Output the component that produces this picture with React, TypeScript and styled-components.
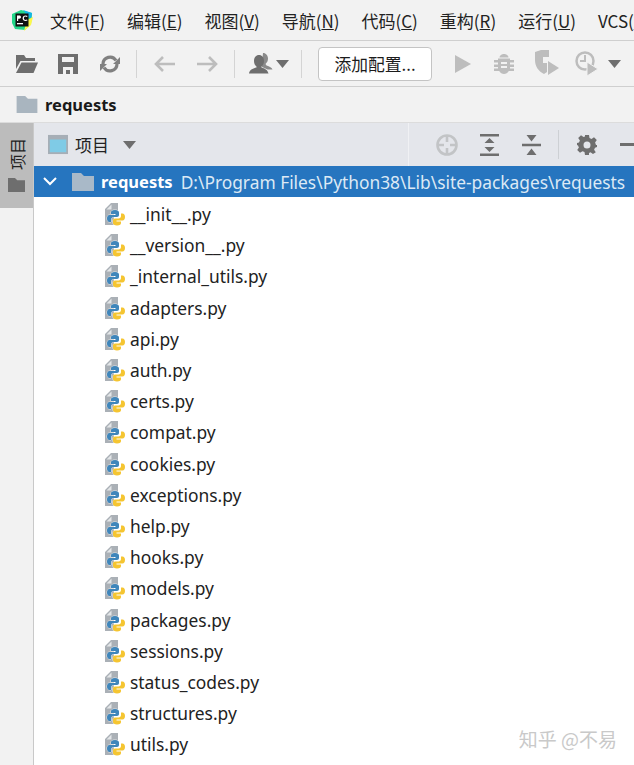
import * as React from "react";
import styled, { createGlobalStyle } from "styled-components";

const files = [
  "__init__.py",
  "__version__.py",
  "_internal_utils.py",
  "adapters.py",
  "api.py",
  "auth.py",
  "certs.py",
  "compat.py",
  "cookies.py",
  "exceptions.py",
  "help.py",
  "hooks.py",
  "models.py",
  "packages.py",
  "sessions.py",
  "status_codes.py",
  "structures.py",
  "utils.py",
];

const menus = [
  { label: "文件", key: "F" },
  { label: "编辑", key: "E" },
  { label: "视图", key: "V" },
  { label: "导航", key: "N" },
  { label: "代码", key: "C" },
  { label: "重构", key: "R" },
  { label: "运行", key: "U" },
  { label: "VCS", key: "S" },
];

const FolderShape = ({ fill, w, h }: { fill: string; w: number; h: number }) => (
  <svg width={w} height={h} viewBox="0 0 22 18">
    <path d="M0 0h9l3 3h10v15H0z" fill={fill} />
  </svg>
);

const pyBlue =
  "M11 8c-3 0-4 1-4 2.500V12h4.500v1H5.500C4 13 3 14.300 3 16.500S4 20 5.500 20H7v-2.500c0-1.500 1-2.500 2.500-2.500h3.500c1.200 0 2-.8 2-2v-2.500C15 9 13.500 8 11 8z";

const PyIcon = () => (
  <svg width="22" height="24" viewBox="0 0 22 24">
    <path d="M1 7l6-6h7v8H10v14H1z" fill="#aab0b6" />
    <path d="M2.500 7.500H7.500V2.500z" fill="#e3e6e8" />
    <path d={pyBlue} fill="#3f86bb" stroke="#fff" strokeWidth="0.700" paintOrder="stroke" />
    <path d={pyBlue} fill="#f5c531" stroke="#fff" strokeWidth="0.700" paintOrder="stroke" transform="rotate(180 12 15.800)" />
  </svg>
);

const Logo = () => (
  <svg width="22" height="22" viewBox="0 0 22 22">
    <path d="M1 5l9-4 11 3-1 11-6 6-10-1-3-6z" fill="#21d789" />
    <path d="M12 1l9 3-1 7z" fill="#12b5e8" />
    <path d="M13 22l7-6 2-8-6 3z" fill="#fcf84a" />
    <rect x="4.500" y="4.500" width="13" height="13" fill="#111" />
    <rect x="6" y="14" width="6" height="1.300" fill="#fff" />
    <path d="M6 6.500h2.200c1.200 0 1.800.7 1.800 1.600s-.7 1.600-1.800 1.600H7.200V12H6zM14.500 12c-1.700 0-2.900-1.200-2.900-2.800s1.200-2.800 3-2.800c.9 0 1.500.3 2 .7l-.7.9c-.4-.3-.8-.5-1.300-.5-1 0-1.700.7-1.700 1.700s.7 1.700 1.700 1.700c.5 0 .9-.2 1.300-.5l.7.8c-.5.500-1.100.8-2.100.8z" fill="#fff" />
  </svg>
);

const OpenFolder = () => (
  <svg width="22" height="18" viewBox="0 0 22 18">
    <path d="M0 0h8l2 3h9v3H4.500L0 14z" fill="#6e6e6e" />
    <path d="M5.500 7.500H22L17.500 18H0z" fill="#6e6e6e" />
  </svg>
);

const Save = () => (
  <svg width="20" height="20" viewBox="0 0 20 20">
    <path fillRule="evenodd" d="M0 0h20v20H0zM4 3v5h12V3zM5 13v7h10v-7z" fill="#6e6e6e" />
    <rect x="8" y="16" width="4" height="4" fill="#6e6e6e" />
  </svg>
);

const Sync = () => (
  <svg width="20" height="20" viewBox="0 0 20 20" fill="none">
    <path d="M16 6.500A7 7 0 0 0 3 10" stroke="#808080" strokeWidth="3.200" />
    <path d="M4 13.500A7 7 0 0 0 17 10" stroke="#808080" strokeWidth="3.200" />
    <path d="M20 3v7h-7zM0 17v-7h7z" fill="#808080" />
  </svg>
);

const Arrow = ({ flip }: { flip?: boolean }) => (
  <svg width="21" height="16" viewBox="0 0 21 16" style={flip ? { transform: "scaleX(-1)" } : undefined}>
    <path d="M9 1L2 8l7 7M2 8h19" fill="none" stroke="#bdbdbd" strokeWidth="2.600" />
  </svg>
);

const User = () => (
  <svg width="24" height="21" viewBox="0 0 24 21">
    <path d="M14 0c3 0 5 2.500 5 5.500 0 2.500-1 4-2.500 5.500l1 1.500c3 1 5.500 2 6 4h-5L13 14V9z" fill="#8a8a8a" />
    <path d="M10 2c3 0 5 2.500 5 6 0 2.500-1 4.500-2.500 5.500v1c3 1 6 2 7 6H0c.5-4 4-5 7.500-6v-1C6 12.500 5 10.500 5 8c0-3.500 2-6 5-6z" fill="#6e6e6e" />
  </svg>
);

const Caret = ({ color }: { color: string }) => (
  <svg width="13" height="8" viewBox="0 0 13 8">
    <path d="M0 0h13L6.500 8z" fill={color} />
  </svg>
);

const Play = () => (
  <svg width="16" height="18" viewBox="0 0 16 18">
    <path d="M0 0l16 9-16 9z" fill="#bdbdbd" />
  </svg>
);

const Bug = () => (
  <svg width="20" height="20" viewBox="0 0 20 20">
    <path d="M5.500 3.500C5.500 1.500 8 0 10 0s4.500 1.500 4.500 3.500z" fill="#bdbdbd" />
    <path d="M4 4.500h12v1.500h4v2.500h-4v2h4V13h-4v1.500h4V17h-5.200c-1 1.700-3 3-4.800 3s-3.800-1.300-4.800-3H0v-2.500h4V13H0v-2.500h4v-2H0V6h4z" fill="#bdbdbd" />
    <rect x="7" y="8" width="6" height="2" fill="#f2f2f2" />
    <rect x="7" y="12" width="6" height="2" fill="#f2f2f2" />
  </svg>
);

const Coverage = () => (
  <svg width="24" height="28" viewBox="0 0 24 28">
    <path d="M0 2l6-2h8v7H8v6h4v9l-3 2C3 21 0 16 0 10z" fill="#bdbdbd" />
    <path d="M13 11l11 7-11 7z" fill="#bdbdbd" />
  </svg>
);

const Profiler = () => (
  <svg width="24" height="28" viewBox="0 0 24 28" fill="none">
    <circle cx="10" cy="11" r="8.500" stroke="#bdbdbd" strokeWidth="2.500" />
    <path d="M10 5v6h-5" stroke="#bdbdbd" strokeWidth="2" />
    <path d="M12 12l11 7-11 7z" fill="#bdbdbd" stroke="#f2f2f2" />
  </svg>
);

const WindowIcon = () => (
  <svg width="22" height="21" viewBox="0 0 22 21">
    <rect width="22" height="21" fill="#a6aeb6" />
    <rect x="2" y="5" width="18" height="14" fill="#7fcbe6" />
  </svg>
);

const Crosshair = () => (
  <svg width="22" height="22" viewBox="0 0 22 22" fill="none">
    <circle cx="11" cy="11" r="9.500" stroke="#c2c4c6" strokeWidth="2.600" />
    <path d="M11 2v6M11 14v6M2 11h6M14 11h6" stroke="#c2c4c6" strokeWidth="2.600" />
  </svg>
);

const ExpandAll = () => (
  <svg width="20" height="22" viewBox="0 0 20 22">
    <path d="M0 0h19v2.500H0zM0 19.500h19V22H0zM9.500 4l5 5h-10zM9.500 18l-5-5h10z" fill="#6e6e6e" />
  </svg>
);

const CollapseAll = () => (
  <svg width="20" height="20" viewBox="0 0 20 20">
    <path d="M0 8.700h19v2.500H0zM4.500 0h10l-5 6.500zM9.500 13.500l5 6.500h-10z" fill="#6e6e6e" />
  </svg>
);

const Gear = () => (
  <svg width="20" height="20" viewBox="0 0 20 20">
    <path
      fillRule="evenodd"
      d="M8 0h4l.5 3 2 .9L17 2.200 19.800 5l-1.700 2.500.9 2.500H20v2l-2 .7-.9 2 1.700 2.500-2.800 1.800-2.500-1.700-1.500.7L12 20H8l-.5-3-2-.8L3 17.800.2 15l1.700-2.500L1 10.500 0 10V8l2-.5.900-2L1.200 3 4 .2l2.500 1.700L8 1.500zM10 6.500a3.500 3.500 0 1 0 0 7 3.500 3.500 0 0 0 0-7z"
      fill="#6e6e6e"
    />
  </svg>
);

const Chevron = () => (
  <svg width="14" height="9" viewBox="0 0 14 9">
    <path d="M1 1l6 6 6-6" fill="none" stroke="#fff" strokeWidth="2" />
  </svg>
);

export default function App() {
  return (
    <Page>
      <GlobalStyle />
      <MenuBar>
        <LogoSlot>
          <Logo />
        </LogoSlot>
        {menus.map((m) => (
          <MenuItem key={m.key}>
            {m.label}(<u>{m.key}</u>)
          </MenuItem>
        ))}
      </MenuBar>

      <Toolbar>
        <ToolSlot $width={22} $left={16}>
          <OpenFolder />
        </ToolSlot>
        <ToolSlot $width={20} $left={20}>
          <Save />
        </ToolSlot>
        <ToolSlot $width={20} $left={22}>
          <Sync />
        </ToolSlot>
        <ToolSep $left={16} />
        <ToolSlot $width={21} $left={17}>
          <Arrow />
        </ToolSlot>
        <ToolSlot $width={21} $left={22}>
          <Arrow flip />
        </ToolSlot>
        <ToolSep $left={16} />
        <ToolSlot $width={24} $left={14}>
          <User />
        </ToolSlot>
        <ToolSlot $width={13} $left={3}>
          <Caret color="#6e6e6e" />
        </ToolSlot>
        <ToolSep $left={12} />
        <ConfigButton>添加配置...</ConfigButton>
        <ToolSlot $width={16} $left={23}>
          <Play />
        </ToolSlot>
        <ToolSlot $width={20} $left={23}>
          <Bug />
        </ToolSlot>
        <ToolSlot $width={24} $left={21}>
          <Coverage />
        </ToolSlot>
        <ToolSlot $width={24} $left={16}>
          <Profiler />
        </ToolSlot>
        <ToolSlot $width={13} $left={9}>
          <Caret color="#6e6e6e" />
        </ToolSlot>
      </Toolbar>

      <Breadcrumb>
        <FolderShape fill="#a9b5bf" w={22} h={17} />
        <CrumbText>requests</CrumbText>
      </Breadcrumb>

      <Workspace>
        <SideRail>
          <SideTab>
            <SideLabel>项目</SideLabel>
            <FolderShape fill="#6e6e6e" w={17} h={14} />
          </SideTab>
        </SideRail>

        <ProjectPanel>
          <PanelHeader>
            <WindowIcon />
            <PanelTitle>项目</PanelTitle>
            <CaretSlot>
              <Caret color="#6e6e6e" />
            </CaretSlot>
            <HeaderTools>
              <HeaderTool $left={0}>
                <Crosshair />
              </HeaderTool>
              <HeaderTool $left={22}>
                <ExpandAll />
              </HeaderTool>
              <HeaderTool $left={22}>
                <CollapseAll />
              </HeaderTool>
              <HeaderSep />
              <HeaderTool $left={18}>
                <Gear />
              </HeaderTool>
              <MinusBar />
            </HeaderTools>
          </PanelHeader>

          <RootRow>
            <ChevronSlot>
              <Chevron />
            </ChevronSlot>
            <FolderShape fill="#a9b9c8" w={22} h={18} />
            <RootName>requests</RootName>
            <RootPath>D:\Program Files\Python38\Lib\site-packages\requests</RootPath>
          </RootRow>

          <FileList>
            {files.map((name) => (
              <FileRow key={name}>
                <PyIcon />
                <FileName>{name}</FileName>
              </FileRow>
            ))}
          </FileList>
        </ProjectPanel>
      </Workspace>

      <Watermark>知乎 @不易</Watermark>
    </Page>
  );
}

const GlobalStyle = createGlobalStyle`
  html, body {
    margin: 0;
    padding: 0;
    background: #fff;
    overflow: hidden;
  }
`;

const Page = styled.div`
  position: relative;
  width: 634px;
  height: 765px;
  overflow: hidden;
  display: flex;
  flex-direction: column;
  background: #f2f2f2;
  color: #1c1c1c;
  font-family: "Noto Sans", "Noto Sans CJK SC", sans-serif;
`;

const MenuBar = styled.div`
  flex: none;
  height: 40px;
  padding: 0 0 0 11px;
  display: flex;
  align-items: center;
  gap: 22px;
  border-bottom: 1px solid #cfcfcf;
  white-space: nowrap;
`;

const LogoSlot = styled.div`
  width: 22px;
  height: 22px;
  margin-right: -5px;
  display: flex;
`;

const MenuItem = styled.span`
  font-size: 17px;
  font-family: "Noto Sans CJK SC", "Noto Sans", sans-serif;
  color: #222;
`;

const Toolbar = styled.div`
  flex: none;
  height: 45px;
  display: flex;
  align-items: center;
  border-bottom: 1px solid #cfcfcf;
  white-space: nowrap;
`;

const ToolSlot = styled.div<{ $width: number; $left: number }>`
  flex: none;
  width: ${(p) => p.$width}px;
  margin-left: ${(p) => p.$left}px;
  display: flex;
  justify-content: center;
  align-items: center;
`;

const ToolSep = styled.div<{ $left: number }>`
  flex: none;
  width: 1px;
  height: 28px;
  margin-left: ${(p) => p.$left}px;
  background: #d4d4d4;
`;

const ConfigButton = styled.div`
  flex: none;
  width: 114px;
  height: 34px;
  margin-left: 16px;
  box-sizing: border-box;
  border: 1px solid #c4c4c4;
  border-radius: 4px;
  background: #fff;
  display: flex;
  align-items: center;
  justify-content: center;
  font-size: 16.800px;
  font-family: "Noto Sans CJK SC", sans-serif;
`;

const Breadcrumb = styled.div`
  flex: none;
  height: 35px;
  padding-left: 16px;
  display: flex;
  align-items: center;
  gap: 7px;
  border-bottom: 1px solid #dcdcdc;
`;

const CrumbText = styled.span`
  font-size: 16.500px;
  font-weight: 700;
  color: #1a1a1a;
`;

const Workspace = styled.div`
  flex: 1;
  display: flex;
  min-height: 0;
`;

const SideRail = styled.div`
  flex: none;
  width: 33px;
  background: #f2f2f2;
  border-right: 1px solid #c9c9c9;
`;

const SideTab = styled.div`
  height: 85px;
  background: #bcbcbc;
  display: flex;
  flex-direction: column;
  align-items: center;
  padding-top: 15px;
  box-sizing: border-box;
  gap: 8px;
`;

const SideLabel = styled.span`
  writing-mode: vertical-rl;
  text-orientation: sideways;
  transform: rotate(180deg);
  font-size: 16px;
  line-height: 1;
  font-family: "Noto Sans CJK SC", sans-serif;
  color: #222;
`;

const ProjectPanel = styled.div`
  flex: 1;
  min-width: 0;
  display: flex;
  flex-direction: column;
  background: #fff;
`;

const PanelHeader = styled.div`
  flex: none;
  height: 43px;
  padding-left: 14px;
  display: flex;
  align-items: center;
  background: #e4e6eb;
  white-space: nowrap;
`;

const PanelTitle = styled.span`
  margin-left: 7px;
  font-size: 17px;
  font-family: "Noto Sans CJK SC", sans-serif;
  color: #222;
`;

const CaretSlot = styled.div`
  margin-left: 14px;
  display: flex;
`;

const HeaderTools = styled.div`
  margin-left: 272px;
  height: 100%;
  flex: 1;
  display: flex;
  align-items: center;
  padding-left: 27px;
  border-left: 1px solid #f0f1f4;
`;

const HeaderTool = styled.div<{ $left: number }>`
  flex: none;
  margin-left: ${(p) => p.$left}px;
  display: flex;
`;

const HeaderSep = styled.div`
  flex: none;
  width: 1px;
  height: 29px;
  margin-left: 16px;
  background: #cdd0d4;
`;

const MinusBar = styled.div`
  flex: none;
  width: 14px;
  height: 3px;
  margin-left: 23px;
  background: #6e6e6e;
`;

const RootRow = styled.div`
  flex: none;
  height: 31px;
  display: flex;
  align-items: center;
  background: #2675bf;
  color: #fff;
  white-space: nowrap;
`;

const ChevronSlot = styled.div`
  width: 14px;
  margin: 0 15px 0 9px;
  display: flex;
`;

const RootName = styled.span`
  margin-left: 7px;
  font-size: 16.500px;
  font-weight: 700;
`;

const RootPath = styled.span`
  margin-left: 8px;
  font-size: 17.350px;
  color: #dce9f5;
`;

const FileList = styled.div`
  flex: 1;
  padding: 1.500px 0 0 70px;
  background: #fff;
`;

const FileRow = styled.div`
  height: 31.200px;
  display: flex;
  align-items: center;
  gap: 4px;
`;

const FileName = styled.span`
  font-size: 17.400px;
  color: #222;
`;

const Watermark = styled.div`
  position: absolute;
  right: 17px;
  bottom: 17px;
  line-height: 1;
  font-size: 19px;
  font-family: "Noto Sans CJK SC", sans-serif;
  color: #c9c9c9;
`;
